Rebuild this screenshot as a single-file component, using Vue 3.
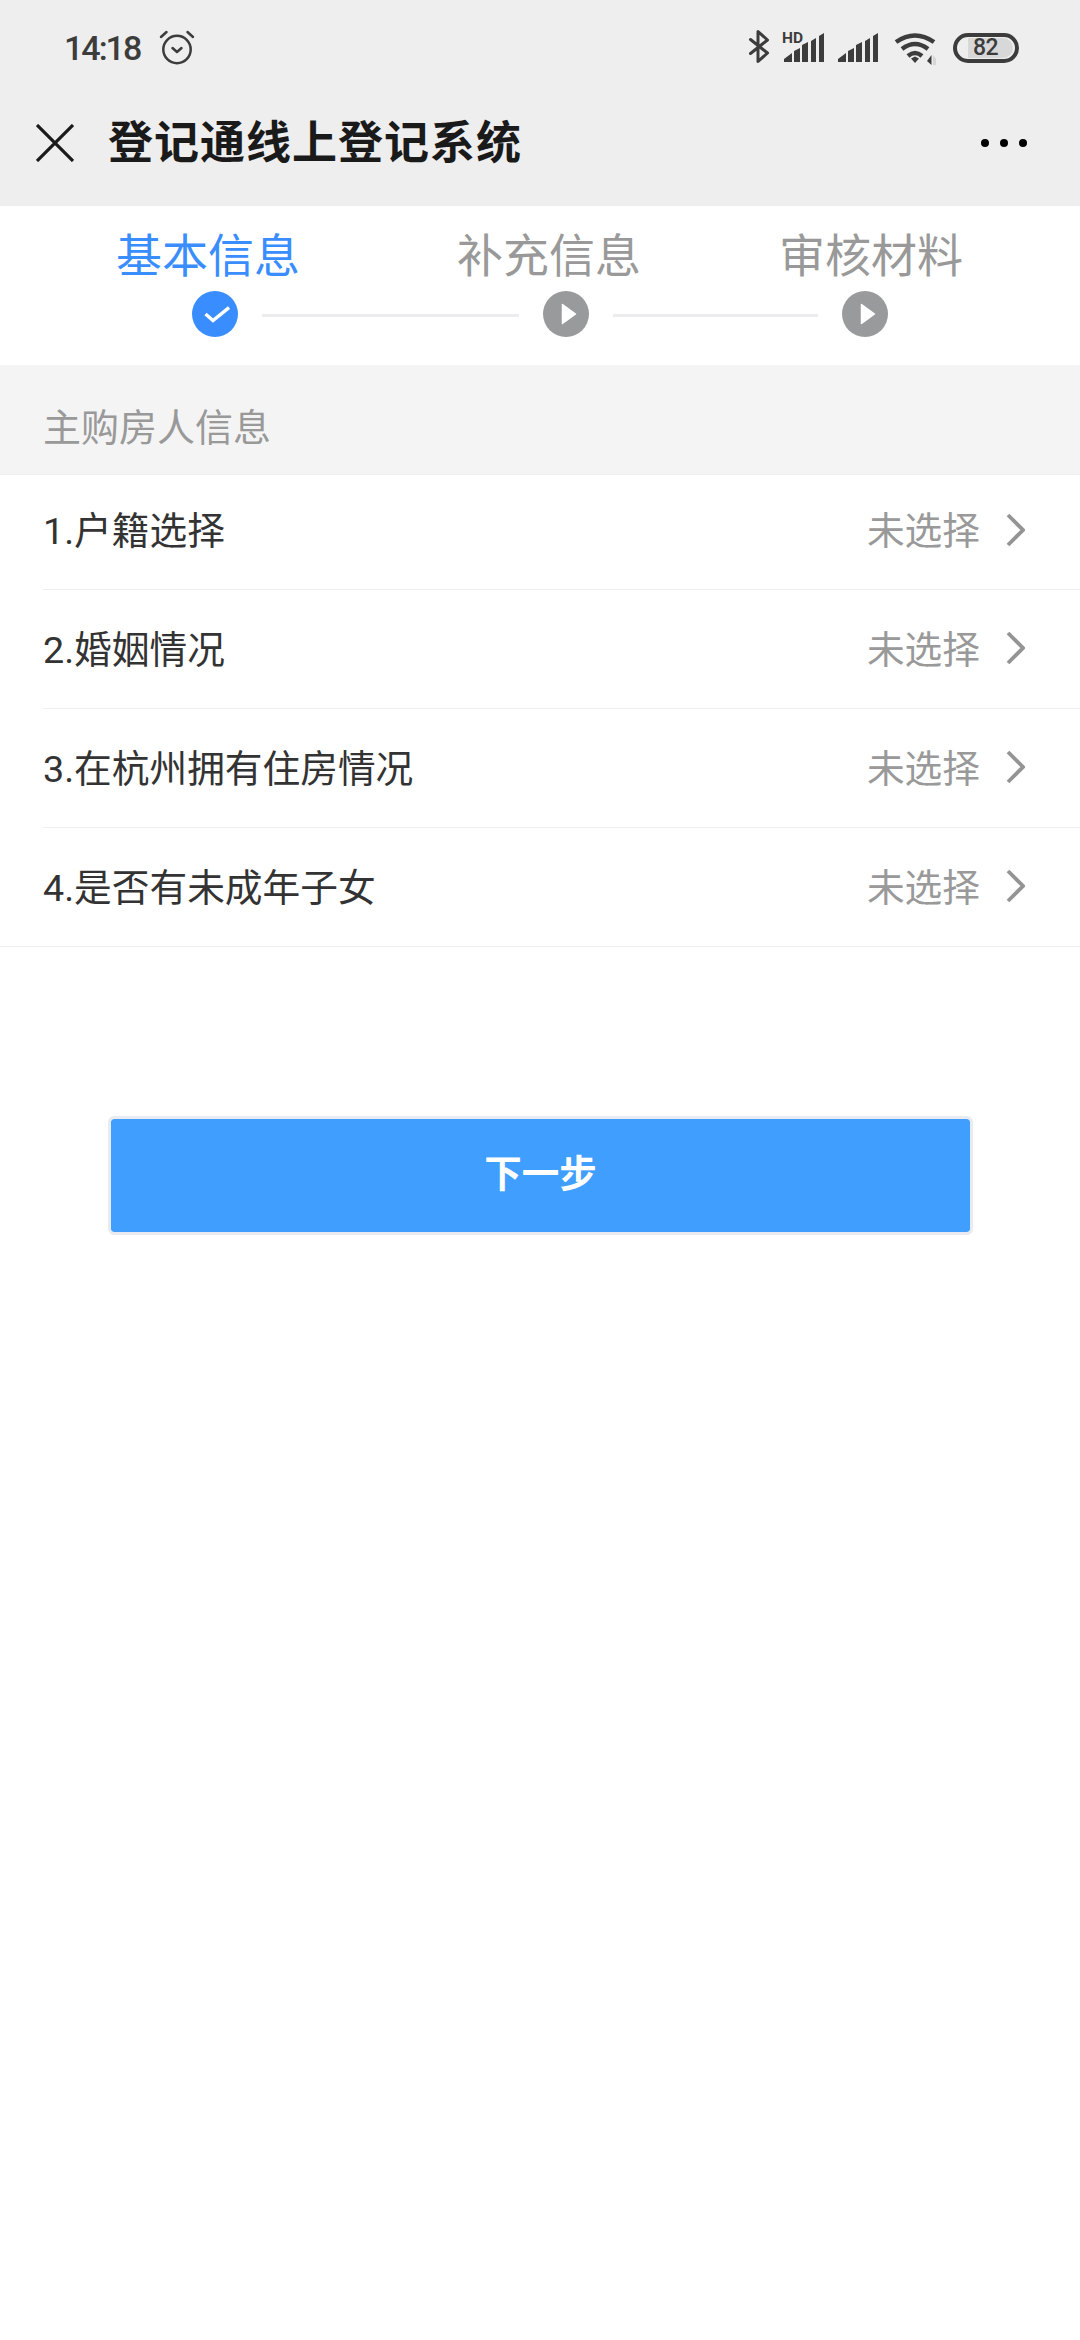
<script setup>
const rows = [
  { id: 1, text: '1.户籍选择' },
  { id: 2, text: '2.婚姻情况' },
  { id: 3, text: '3.在杭州拥有住房情况' },
  { id: 4, text: '4.是否有未成年子女' },
]
</script>

<template>
  <div class="page">
    <header class="top">
      <div class="status">
        <div class="status-left">
          <span class="time">14:18</span>
          <svg class="alarm" width="36" height="36" viewBox="0 0 36 36" fill="none" stroke="#3c3c3c" stroke-width="2.500" stroke-linecap="round" stroke-linejoin="round">
            <circle cx="18" cy="20.500" r="13.700" />
            <path d="M2 8 7.500 3M34 8 28.500 3" />
            <path d="M13.500 19l4.500 4 4.500-4" />
          </svg>
        </div>
        <div class="status-right">
          <svg class="bt" width="22" height="35" viewBox="0 0 22 35" fill="none" stroke="#3c3c3c" stroke-width="3" stroke-linecap="round" stroke-linejoin="round">
            <path d="M2.500 10.500 19.500 24 10 32.500V2.500L19.500 11 2.500 24.500" />
          </svg>
          <div class="hd-signal">
            <span class="hd">HD</span>
            <svg width="40" height="29" viewBox="0 0 40 29" fill="#3c3c3c">
              <path d="M0 29v-3l8-6v9zM10 29V18l6-3v14zM18 29V12l6-3v20zM27 29V8l5-3v24zM35 29V3l5-3v29z" />
            </svg>
          </div>
          <svg class="sig" width="40" height="29" viewBox="0 0 40 29" fill="#3c3c3c">
            <path d="M0 29v-3l8-6v9zM10 29V18l6-3v14zM18 29V12l6-3v20zM27 29V8l5-3v24zM35 29V3l5-3v29z" />
          </svg>
          <svg class="wifi" width="44" height="34" viewBox="0 0 44 34" fill="none" stroke="#3c3c3c" stroke-width="4.500">
            <path d="M3 10Q22-3 41 10" />
            <path d="M9 17Q22 7 35 17" />
            <path d="M15 24Q22 18 29 24" />
            <path d="M18 26.500 22 24.500 26 26.500 22 31z" fill="#3c3c3c" stroke="none" />
            <path d="M38.500 23v10l-4.500-4z" fill="#3c3c3c" stroke="none" />
            <path d="M40 23v10h3v-6z" fill="#d6d6d6" stroke="none" />
          </svg>
          <div class="battery"><div class="battery-fill"><span>82</span></div></div>
        </div>
      </div>
      <div class="nav">
        <svg class="close" width="38" height="38" viewBox="0 0 38 38" fill="none" stroke="#1a1a1a" stroke-width="3.200">
          <path d="M1 1l36 36M37 1 1 37" />
        </svg>
        <h1 class="title">登记通线上登记系统</h1>
        <div class="more"><i></i><i></i><i></i></div>
      </div>
    </header>

    <section class="steps">
      <div class="labels">
        <span class="label active">基本信息</span>
        <span class="label second">补充信息</span>
        <span class="label third">审核材料</span>
      </div>
      <div class="track">
        <span class="dot done">
          <svg class="check" width="26" height="18" viewBox="0 0 26 18" fill="none" stroke="#fff" stroke-width="3.400">
            <path d="M1.500 9 9 15.500 25 2.500" />
          </svg>
        </span>
        <span class="line line-a"></span>
        <span class="dot">
          <svg class="play" width="16" height="22" viewBox="0 0 16 22" fill="#fff" stroke="#fff" stroke-width="1.500" stroke-linejoin="round">
            <path d="M1.500 1.500v19L14.500 11z" />
          </svg>
        </span>
        <span class="line line-b"></span>
        <span class="dot">
          <svg class="play" width="16" height="22" viewBox="0 0 16 22" fill="#fff" stroke="#fff" stroke-width="1.500" stroke-linejoin="round">
            <path d="M1.500 1.500v19L14.500 11z" />
          </svg>
        </span>
      </div>
    </section>

    <div class="section-head">主购房人信息</div>

    <ul class="list">
      <li v-for="row in rows" :key="row.id" class="row">
        <span class="row-text">{{ row.text }}</span>
        <span class="row-value">未选择</span>
        <svg class="chev" width="19" height="34" viewBox="0 0 19 34" fill="none" stroke="#949494" stroke-width="3.800">
          <path d="M2 2l15 15L2 32" />
        </svg>
      </li>
    </ul>

    <div class="actions">
      <button class="next" type="button">下一步</button>
    </div>
  </div>
</template>

<style>
html, body { margin: 0; background: #fff; }
</style>

<style scoped>
.page {
  width: 1080px;
  height: 2340px;
  background: #fff;
  font-family: Roboto, "Noto Sans CJK SC", sans-serif;
  overflow: hidden;
}
.top {
  height: 206px;
  background: #eee;
}
.status {
  height: 94px;
  box-sizing: border-box;
  padding: 29px 61px 0 64px;
  display: flex;
  justify-content: space-between;
  align-items: flex-start;
}
.status-left {
  display: flex;
  align-items: center;
  height: 38px;
}
.time {
  font-size: 34px;
  font-weight: 500;
  color: #3c3c3c;
  line-height: 38px;
  letter-spacing: -2px;
}
.alarm { margin: -2px 0 0 19px; }
.status-right {
  display: flex;
  align-items: flex-start;
}
.hd-signal {
  position: relative;
  width: 40px;
  height: 33px;
  margin: 3px 0 0 14px;
}
.hd-signal svg { position: absolute; left: 0; top: 1px; }
.hd {
  position: absolute;
  left: -2px;
  top: -1px;
  font-size: 15.500px;
  line-height: 15px;
  font-weight: 700;
  color: #3c3c3c;
}
.sig { margin: 4px 0 0 14px; }
.wifi { margin: 3px 0 0 15px; }
.battery {
  width: 66px;
  height: 30px;
  box-sizing: border-box;
  border: 4px solid #3c3c3c;
  border-radius: 15px;
  margin: 4px 0 0 16px;
  padding: 1px 2px 1px 11px;
}
.battery-fill {
  height: 20px;
  background: #d8d8d8;
  border-radius: 0 10px 10px 0;
  font-size: 23px;
  line-height: 20px;
  font-weight: 500;
  color: #3c3c3c;
  padding-left: 5px;
  letter-spacing: -0.500px;
}
.nav {
  display: flex;
  align-items: center;
  height: 100px;
  padding-left: 36px;
}
.close { flex: none; margin-top: -2px; }
.title {
  margin: 0 0 0 34px;
  font-size: 45px;
  font-weight: 700;
  color: #1a1a1a;
  letter-spacing: 1px;
  line-height: 60px;
}
.more {
  margin: -2px 53px 0 auto;
  display: flex;
  gap: 11px;
}
.more i {
  display: block;
  width: 8px;
  height: 8px;
  border-radius: 50%;
  background: #000;
}

.steps {
  height: 159px;
  box-sizing: border-box;
  padding-top: 18px;
}
.labels {
  display: flex;
  height: 67px;
  padding-left: 116px;
}
.label {
  font-size: 46px;
  line-height: 64px;
  color: #999;
  white-space: nowrap;
}
.label.active { color: #3a8dff; }
.label.second { margin-left: 157px; }
.label.third { margin-left: 138px; }
.track {
  display: flex;
  align-items: center;
  padding-left: 192px;
}
.dot {
  flex: none;
  display: flex;
  align-items: center;
  justify-content: center;
  width: 46px;
  height: 46px;
  border-radius: 50%;
  background: #999a9c;
}
.dot.done { background: #3a8dff; }
.check { margin-left: 3px; }
.play { margin-left: 6px; }
.line {
  flex: none;
  height: 3px;
  background: #ececee;
  margin: 3px 24px 0;
}
.line-a { width: 257px; }
.line-b { width: 205px; }

.section-head {
  height: 110px;
  box-sizing: border-box;
  background: #f4f4f4;
  border-bottom: 1px solid #eee;
  padding: 9px 0 0 43px;
  display: flex;
  align-items: center;
  font-size: 38px;
  color: #999;
}

.list {
  list-style: none;
  margin: 0;
  padding: 0;
  border-bottom: 1px solid #eee;
}
.row {
  display: flex;
  align-items: center;
  height: 118px;
  margin-left: 43px;
  padding-right: 55px;
  font-size: 37.700px;
  border-bottom: 1px solid #eee;
}
.row:first-child { height: 114px; }
.row:last-child { border-bottom: 0; }
.row-text { color: #333; margin-bottom: 6px; }
.row-value { margin: 0 0 6px auto; color: #999; }
.chev { margin: 0 0 3px 26px; flex: none; }
.row:first-child .row-text,
.row:first-child .row-value { margin-bottom: 10px; }
.row:first-child .chev { margin-bottom: 5px; }

.actions {
  padding: 169px 0 0 108px;
}
.next {
  display: block;
  width: 865px;
  height: 119px;
  box-sizing: border-box;
  border: 3px solid #e8ebf0;
  border-radius: 6px;
  background: #409eff;
  background-clip: padding-box;
  color: #fff;
  font-family: inherit;
  font-size: 37.500px;
  font-weight: 700;
  padding: 0 0 11px;
}
</style>
